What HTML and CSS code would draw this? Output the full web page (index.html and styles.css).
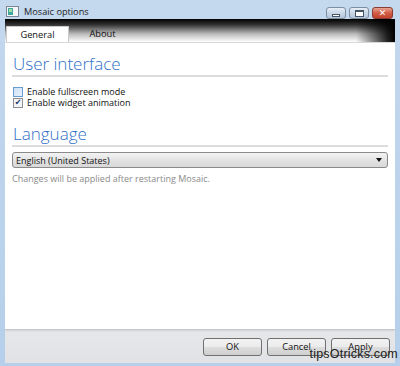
FILE: index.html
```html
<!DOCTYPE html>
<html lang="en">
<head>
    <meta charset="UTF-8">
    <title>Mosaic options</title>
    <link rel="stylesheet" href="styles.css">
</head>
<body>
    <div class="window">
        <div class="titlebar">
            <svg class="app-icon" width="13" height="11" viewBox="0 0 13 11">
                <rect x="0.5" y="0.5" width="12" height="10" fill="#f4f6f8" stroke="#7a8696"/>
                <rect x="2" y="2" width="5" height="7" fill="#3fa6a0"/>
                <rect x="3" y="3" width="3" height="3" fill="#9fe0a0"/>
            </svg>
            <span class="title">Mosaic options</span>
            <div class="caption-buttons">
                <div class="cap-btn"><span class="min-glyph"></span></div>
                <div class="cap-btn"><span class="max-glyph"></span></div>
                <div class="cap-btn close"><span class="close-glyph">✕</span></div>
            </div>
        </div>

        <div class="client">
            <div class="tabbar">
                <div class="tab active">General</div>
                <div class="tab">About</div>
            </div>

            <div class="content">
                <h2>User interface</h2>
                <label class="check"><span class="box hover"></span>Enable fullscreen mode</label>
                <label class="check"><span class="box checked">✔</span>Enable widget animation</label>

                <h2 class="lang">Language</h2>
                <div class="select">
                    <span>English (United States)</span>
                    <span class="arrow"></span>
                </div>
                <p class="hint">Changes will be applied after restarting Mosaic.</p>
            </div>

            <div class="buttonbar">
                <button>OK</button>
                <button>Cancel</button>
                <button>Apply</button>
            </div>
        </div>

        <div class="watermark">tipsOtricks.com</div>
    </div>
</body>
</html>
```

FILE: styles.css
```css
* {
    margin: 0;
    padding: 0;
    box-sizing: border-box;
}

body {
    font-family: "Open Sans", "Noto Sans", sans-serif;
    font-size: 9px;
    color: #111;
    background: #b9d1ea;
}

.window {
    position: relative;
    width: 400px;
    height: 366px;
    display: flex;
    flex-direction: column;
    background: linear-gradient(to bottom, #c4d8ee, #b6cfea);
    padding: 0 5px 3px 5px;
}

/* title bar */
.titlebar {
    height: 19px;
    display: flex;
    align-items: center;
    padding-top: 3px;
}

.app-icon {
    margin-left: 1px;
    margin-right: 5px;
}

.title {
    font-size: 9.2px;
    color: #1e1e1e;
}

.caption-buttons {
    margin-left: auto;
    display: flex;
    gap: 3px;
    margin-right: 2px;
    align-self: flex-start;
    margin-top: 4px;
}

.cap-btn {
    width: 20px;
    height: 12px;
    border: 1px solid #7d8ea3;
    border-radius: 3px;
    background: linear-gradient(to bottom, #e8eef6, #c8d6e6 50%, #b5c6da);
    display: flex;
    align-items: center;
    justify-content: center;
}

.cap-btn.close {
    width: 21px;
    border-color: #8a3b33;
    background: linear-gradient(to bottom, #e8a493, #d25c46 50%, #c2432c);
}

.min-glyph {
    width: 8px;
    height: 3px;
    margin-top: 4px;
    background: #fff;
    border: 1px solid #445566;
}

.max-glyph {
    width: 9px;
    height: 7px;
    background: #fff;
    border: 1px solid #445566;
    border-top-width: 2px;
}

.close-glyph {
    color: #fff;
    font-size: 9px;
    font-weight: bold;
    line-height: 1;
    font-family: "DejaVu Sans", sans-serif;
}

/* client area */
.client {
    flex: 1;
    display: flex;
    flex-direction: column;
    background: #fff;
}

.tabbar {
    height: 24px;
    display: flex;
    align-items: flex-end;
    padding-left: 1px;
    background:
        linear-gradient(to right, rgba(0,0,0,0) 90%, rgba(0,0,0,0.85) 98%, #000),
        linear-gradient(to bottom, #000 0%, #333 25%, #bbb 65%, #fff 100%);
    border-bottom: 1px solid #d8d8d8;
}

.tab {
    width: 67px;
    height: 16px;
    text-align: center;
    line-height: 16px;
    font-size: 9.3px;
    color: #111;
}

.tab.active {
    background: #fff;
    border: 1px solid #c9c9c9;
    border-bottom: none;
    width: 63px;
}

.content {
    flex: 1;
    padding: 10px 7px 0 7px;
}

h2 {
    font-weight: 300;
    font-size: 17px;
    color: #2f6fc6;
    line-height: 22px;
    padding-left: 1px;
    border-bottom: 2px solid #dcdcdc;
    padding-bottom: 0;
    margin-bottom: 9px;
}

h2.lang {
    margin-top: 15px;
    margin-bottom: 5px;
}

.check {
    display: flex;
    align-items: center;
    height: 11px;
    line-height: 11px;
    padding-left: 1px;
}

.box {
    width: 10px;
    height: 10px;
    border: 1px solid #8aa0b8;
    background: linear-gradient(135deg, #dfe9f5, #f4f8fc);
    margin-right: 4px;
    font-size: 8px;
    line-height: 8px;
    color: #22336e;
    text-align: center;
    font-family: "DejaVu Sans", sans-serif;
}

.box.hover {
    border-color: #6c9bd2;
    background: linear-gradient(135deg, #cfe2f7, #e6f0fb);
}

.box.checked {
    background: #f2f4f6;
    border-color: #8a8f96;
}

.select {
    display: flex;
    align-items: center;
    height: 16px;
    border: 1px solid #8a8a8a;
    border-radius: 3px;
    background: linear-gradient(to bottom, #f3f3f3, #e3e3e3 50%, #d8d8d8);
    padding: 0 5px 0 3px;
    color: #111;
}

.arrow {
    margin-left: auto;
    width: 0;
    height: 0;
    border-left: 3px solid transparent;
    border-right: 3px solid transparent;
    border-top: 4px solid #111;
}

.hint {
    margin-top: 4px;
    color: #8a8a8a;
}

/* bottom buttons */
.buttonbar {
    height: 34px;
    display: flex;
    justify-content: flex-end;
    align-items: center;
    gap: 5px;
    padding-right: 5px;
    background: linear-gradient(to bottom, #cfd1d4 0, #e6e7e9 2px, #e0e2e5 100%);
    border-top: 1px solid #c6c8cc;
}

button {
    width: 59px;
    height: 18px;
    font-family: inherit;
    font-size: 9.3px;
    color: #111;
    border: 1px solid #707070;
    border-radius: 3px;
    background: linear-gradient(to bottom, #f2f2f2, #ebebeb 50%, #dddddd 51%, #cfcfcf);
}

.watermark {
    position: absolute;
    right: 2px;
    bottom: 5px;
    font-family: "Liberation Sans", sans-serif;
    font-size: 12.5px;
    color: #222;
    letter-spacing: 0.2px;
}
```
